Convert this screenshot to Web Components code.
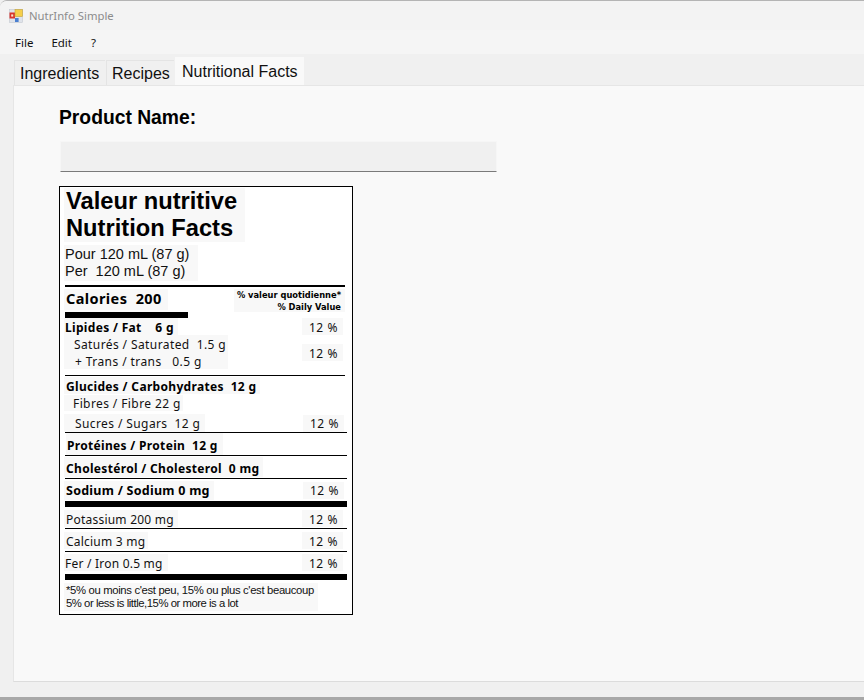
<!DOCTYPE html>
<html>
<head>
<meta charset="utf-8">
<title>NutrInfo Simple</title>
<style>
    html, body { margin: 0; padding: 0; background: #f0f0f0; }
    body { font-family: "Liberation Sans", Arial, sans-serif; overflow: hidden; }
</style>
</head>
<body>

<app-window>
    <tab-strip></tab-strip>
    <product-page>
        <nf-panel>
            <nf-row flat top="1" h="54" left="4" pad="2" box="181" class="title">Valeur nutritive<br>Nutrition Facts</nf-row>
            <nf-row flat top="3" h="36" left="4" pad="1" box="134" class="serving">Pour 120 mL (87 g)<br>Per&nbsp; 120 mL (87 g)</nf-row>
            <nf-line top="4" h="2" width="280"></nf-line>
            <nf-row flat top="2" h="23" left="4" pad="2" box="104" boxh="21" kind="bold big">Calories&nbsp; 200
                <span slot="right">% valeur quotidienne*<br>% Daily Value</span></nf-row>
            <nf-line h="6" width="123"></nf-line>
            <nf-row h="17" left="4" pad="1" box="114" kind="bold">Lipides / Fat&nbsp;&nbsp;&nbsp; 6 g
                <span slot="right">12 %</span></nf-row>
            <nf-row h="34" left="4" pad="10" box="164">Saturés / Saturated&nbsp; 1.5 g<br><span style="margin-left:1px;letter-spacing:.42px">+ Trans / trans&nbsp;&nbsp; 0.5 g</span>
                <span slot="right">12 %</span></nf-row>
            <nf-line top="6" h="1" width="280"></nf-line>
            <nf-row top="1" h="17" left="4" pad="2" box="196" kind="bold">Glucides / Carbohydrates&nbsp; 12 g</nf-row>
            <nf-row flat top="1" h="16" left="4" pad="9" box="119">Fibres / Fibre 22 g</nf-row>
            <nf-row flat top="3" h="18" left="4" pad="11" box="141">Sucres / Sugars&nbsp; 12 g
                <span slot="right">12 %</span></nf-row>
            <nf-line h="1" width="282"></nf-line>
            <nf-row h="22" left="6" pad="1" box="157" kind="bold">Protéines / Protein&nbsp; 12 g</nf-row>
            <nf-line h="1" width="282"></nf-line>
            <nf-row top="1" h="20" left="4" pad="2" box="199" kind="bold">Cholestérol / Cholesterol&nbsp; 0 mg</nf-row>
            <nf-line top="1" h="1" width="282"></nf-line>
            <nf-row flat top="2" h="19" left="4" pad="2" box="150" kind="bold sodium">Sodium / Sodium 0 mg
                <span slot="right">12 %</span></nf-row>
            <nf-line top="1" h="6" width="282"></nf-line>
            <nf-row top="3" h="17" left="4" pad="2" box="114" kind="tight">Potassium 200 mg
                <span slot="right">12 %</span></nf-row>
            <nf-line top="1" h="1" width="282"></nf-line>
            <nf-row top="3" h="17" left="4" pad="2" box="84" kind="tight">Calcium 3 mg
                <span slot="right">12 %</span></nf-row>
            <nf-line top="2" h="1" width="282"></nf-line>
            <nf-row top="2" h="17" left="4" pad="1" box="104" kind="tight">Fer / Iron 0.5 mg
                <span slot="right">12 %</span></nf-row>
            <nf-line top="3" h="6" width="282"></nf-line>
            <nf-row flat top="3" h="28" left="4" pad="2" box="254" kind="foot">*5% ou moins c'est peu, 15% ou plus c'est beaucoup<br><span style="letter-spacing:-.46px">5% or less is little,15% or more is a lot</span></nf-row>
        </nf-panel>
    </product-page>
</app-window>

<script>
    // Window frame: title bar, menu bar, then whatever page is slotted in
    class AppWindow extends HTMLElement {
        connectedCallback() {
            this.attachShadow({ mode: 'open' });
            this.shadowRoot.innerHTML = `
                <style>
                    :host {
                        display: flex;
                        flex-direction: column;
                        width: 864px;
                        height: 700px;
                        box-sizing: border-box;
                        background: #f0f0f0;
                        border-top: 1px solid #b4b4b4;
                        border-bottom: 3px solid #a8a8a8;
                        border-top-left-radius: 7px;
                        overflow: hidden;
                        font-family: "Noto Sans", "Open Sans", sans-serif;
                    }
                    .title {
                        display: flex;
                        align-items: center;
                        gap: 6px;
                        height: 29px;
                        padding-left: 9px;
                        font-size: 11.3px;
                        color: #8c8c8c;
                        background: #f3f3f3;
                    }
                    .menu {
                        display: flex;
                        align-items: center;
                        height: 24px;
                        padding: 1px 0 0 15px;
                        box-sizing: border-box;
                        gap: 18px;
                        font-size: 11.5px;
                        color: #111;
                        background: #f5f5f5;
                    }
                    .body { flex: 1; display: flex; flex-direction: column; min-height: 0; }
                </style>
                <div class="title">
                    <svg width="14" height="14" viewBox="0 0 14 14">
                        <rect x="0.5" y="0.5" width="13" height="13" fill="#dfe3ea" stroke="#c4c8d0" stroke-width="0.6"/>
                        <rect x="0.5" y="3.5" width="5.5" height="6" fill="#d8342c"/>
                        <rect x="2.2" y="5.4" width="2" height="2.2" fill="#f6e5d0"/>
                        <rect x="6" y="0.5" width="7.5" height="7" fill="#f6cf4a" stroke="#c2a23c" stroke-width="0.6"/>
                        <rect x="6" y="9" width="3.6" height="4" fill="#4a7fd0"/>
                    </svg>
                    <span>NutrInfo Simple</span>
                </div>
                <div class="menu"><span>File</span><span>Edit</span><span style="margin-left:1px">?</span></div>
                <div class="body"><slot></slot></div>
            `;
        }
    }

    class TabStrip extends HTMLElement {
        connectedCallback() {
            this.attachShadow({ mode: 'open' });
            this.shadowRoot.innerHTML = `
                <style>
                    :host {
                        display: flex;
                        align-items: flex-end;
                        height: 31px;
                        padding-left: 14px;
                        gap: 1px;
                        box-sizing: border-box;
                        font-family: "Liberation Sans", Arial, sans-serif;
                        font-size: 16px;
                        color: #111;
                        white-space: nowrap;
                    }
                    .tab {
                        height: 24px;
                        line-height: 25px;
                        padding: 0 5px;
                        background: #f0f0f0;
                        border-top: 1px solid #e4e4e4;
                        border-left: 1px solid #e4e4e4;
                    }
                    .tab.on {
                        height: 27px;
                        line-height: 27px;
                        padding: 0 7px 0 6px;
                        background: #f9f9f9;
                        border-color: #f9f9f9;
                    }
                </style>
                <div class="tab" style="width:80px">Ingredients</div>
                <div class="tab" style="width:57px">Recipes</div>
                <div class="tab on" style="width:115px">Nutritional Facts</div>
            `;
        }
    }

    // Tab page holding the product name field and the label
    class ProductPage extends HTMLElement {
        connectedCallback() {
            this.attachShadow({ mode: 'open' });
            this.shadowRoot.innerHTML = `
                <style>
                    :host {
                        display: block;
                        flex: 1;
                        margin-left: 13px;
                        margin-bottom: 15px;
                        padding: 21px 0 0 45px;
                        background: #f9f9f9;
                        border-top: 1px solid #e6e6e6;
                        border-left: 1px solid #e6e6e6;
                        border-bottom: 1px solid #dcdcdc;
                        font-family: "Liberation Sans", Arial, sans-serif;
                    }
                    .name {
                        height: 22px;
                        line-height: 22px;
                        font-size: 19.3px;
                        font-weight: bold;
                        color: #000;
                    }
                    .field {
                        width: 437px;
                        height: 31px;
                        margin: 12px 0 14px 1px;
                        box-sizing: border-box;
                        background: #f0f0f0;
                        border: 1px solid #f6f6f6;
                        border-bottom: 1px solid #7a7a7a;
                    }
                </style>
                <div class="name">Product Name:</div>
                <div class="field"></div>
                <slot></slot>
            `;
        }
    }

    class NfPanel extends HTMLElement {
        connectedCallback() {
            this.attachShadow({ mode: 'open' });
            this.shadowRoot.innerHTML = `
                <style>
                    :host {
                        display: flex;
                        flex-direction: column;
                        width: 294px;
                        height: 429px;
                        box-sizing: border-box;
                        background: #fff;
                        border: 1px solid #000;
                        color: #111;
                    }
                </style>
                <slot></slot>
            `;
        }
    }

    // Black rule across the label
    class NfLine extends HTMLElement {
        connectedCallback() {
            this.attachShadow({ mode: 'open' });
            this.shadowRoot.innerHTML = `
                <style>
                    :host {
                        display: block;
                        flex: none;
                        margin-left: 5px;
                        background: #000;
                    }
                </style>
            `;
            this.style.height = this.getAttribute('h') + 'px';
            this.style.width = this.getAttribute('width') + 'px';
            this.style.marginTop = (this.getAttribute('top') || 0) + 'px';
        }
    }

    // One line of the label: text in its pale box on the left, value box on the right
    class NfRow extends HTMLElement {
        connectedCallback() {
            this.attachShadow({ mode: 'open' });
            const kind = this.getAttribute('kind') || '';
            const h = +this.getAttribute('h');
            const boxW = this.getAttribute('box');
            const boxH = this.getAttribute('boxh') || h;
            const rightEl = this.querySelector('[slot=right]');
            const isDv = rightEl && rightEl.querySelector('br');
            this.shadowRoot.innerHTML = `
                <style>
                    :host {
                        display: flex;
                        flex: none;
                        justify-content: space-between;
                        align-items: center;
                        font-family: "Noto Sans", "Open Sans", sans-serif;
                        font-size: 12px;
                        letter-spacing: 0.4px;
                        line-height: 17px;
                        white-space: nowrap;
                    }
                    .text {
                        display: flex;
                        align-items: center;
                        align-self: flex-start;
                        box-sizing: border-box;
                        padding-top: 2px;
                        background: #f8f8f8;
                    }
                    .right {
                        width: 41px;
                        height: 17px;
                        margin-right: 9px;
                        padding-left: 2px;
                        line-height: 19px;
                        box-sizing: border-box;
                        text-align: center;
                        background: #f8f8f8;
                        letter-spacing: 0.6px;
                    }
                    :host([flat]) .text { padding-top: 0; }
                    :host([flat]) .right { margin-right: 8px; line-height: 17px; }
                    .dv {
                        width: 111px;
                        height: 23px;
                        margin-right: 7px;
                        align-self: flex-start;
                        text-align: right;
                        font-family: "DejaVu Sans", sans-serif;
                        font-size: 8.3px;
                        font-weight: bold;
                        line-height: 12px;
                        letter-spacing: 0;
                        padding: 0 4px 0 0;
                        box-sizing: border-box;
                        background: #f8f8f8;
                        color: #000;
                    }
                    :host(.title) .text { font-family: "Liberation Sans", sans-serif; font-size: 23.7px; font-weight: bold; line-height: 27px; letter-spacing: 0; color: #000; }
                    :host(.serving) .text { font-family: "Liberation Sans", sans-serif; font-size: 14.5px; line-height: 17px; letter-spacing: 0; }
                    .bold { font-weight: 700; color: #000; letter-spacing: 0.32px; }
                    .big { font-size: 14.5px; letter-spacing: 0.4px; padding-bottom: 2px; }
                    .sodium { font-size: 12.5px; letter-spacing: 0.25px; }
                    .tight { letter-spacing: 0.22px; }
                    .foot { font-family: "Liberation Sans", sans-serif; font-size: 11.3px; line-height: 13px; letter-spacing: -0.34px; }
                </style>
                <div class="text ${kind}" style="margin-left:${this.getAttribute('left')}px;padding-left:${this.getAttribute('pad')}px;width:${boxW}px;height:${boxH}px"><div><slot></slot></div></div>
                <div class="${isDv ? 'dv' : 'right'}" id="r"><slot name="right"></slot></div>
            `;
            this.style.height = h + 'px';
            this.style.marginTop = (this.getAttribute('top') || 0) + 'px';
            if (!rightEl) this.shadowRoot.getElementById('r').style.display = 'none';
        }
    }

    customElements.define('app-window', AppWindow);
    customElements.define('tab-strip', TabStrip);
    customElements.define('product-page', ProductPage);
    customElements.define('nf-panel', NfPanel);
    customElements.define('nf-line', NfLine);
    customElements.define('nf-row', NfRow);
</script>
</body>
</html>
